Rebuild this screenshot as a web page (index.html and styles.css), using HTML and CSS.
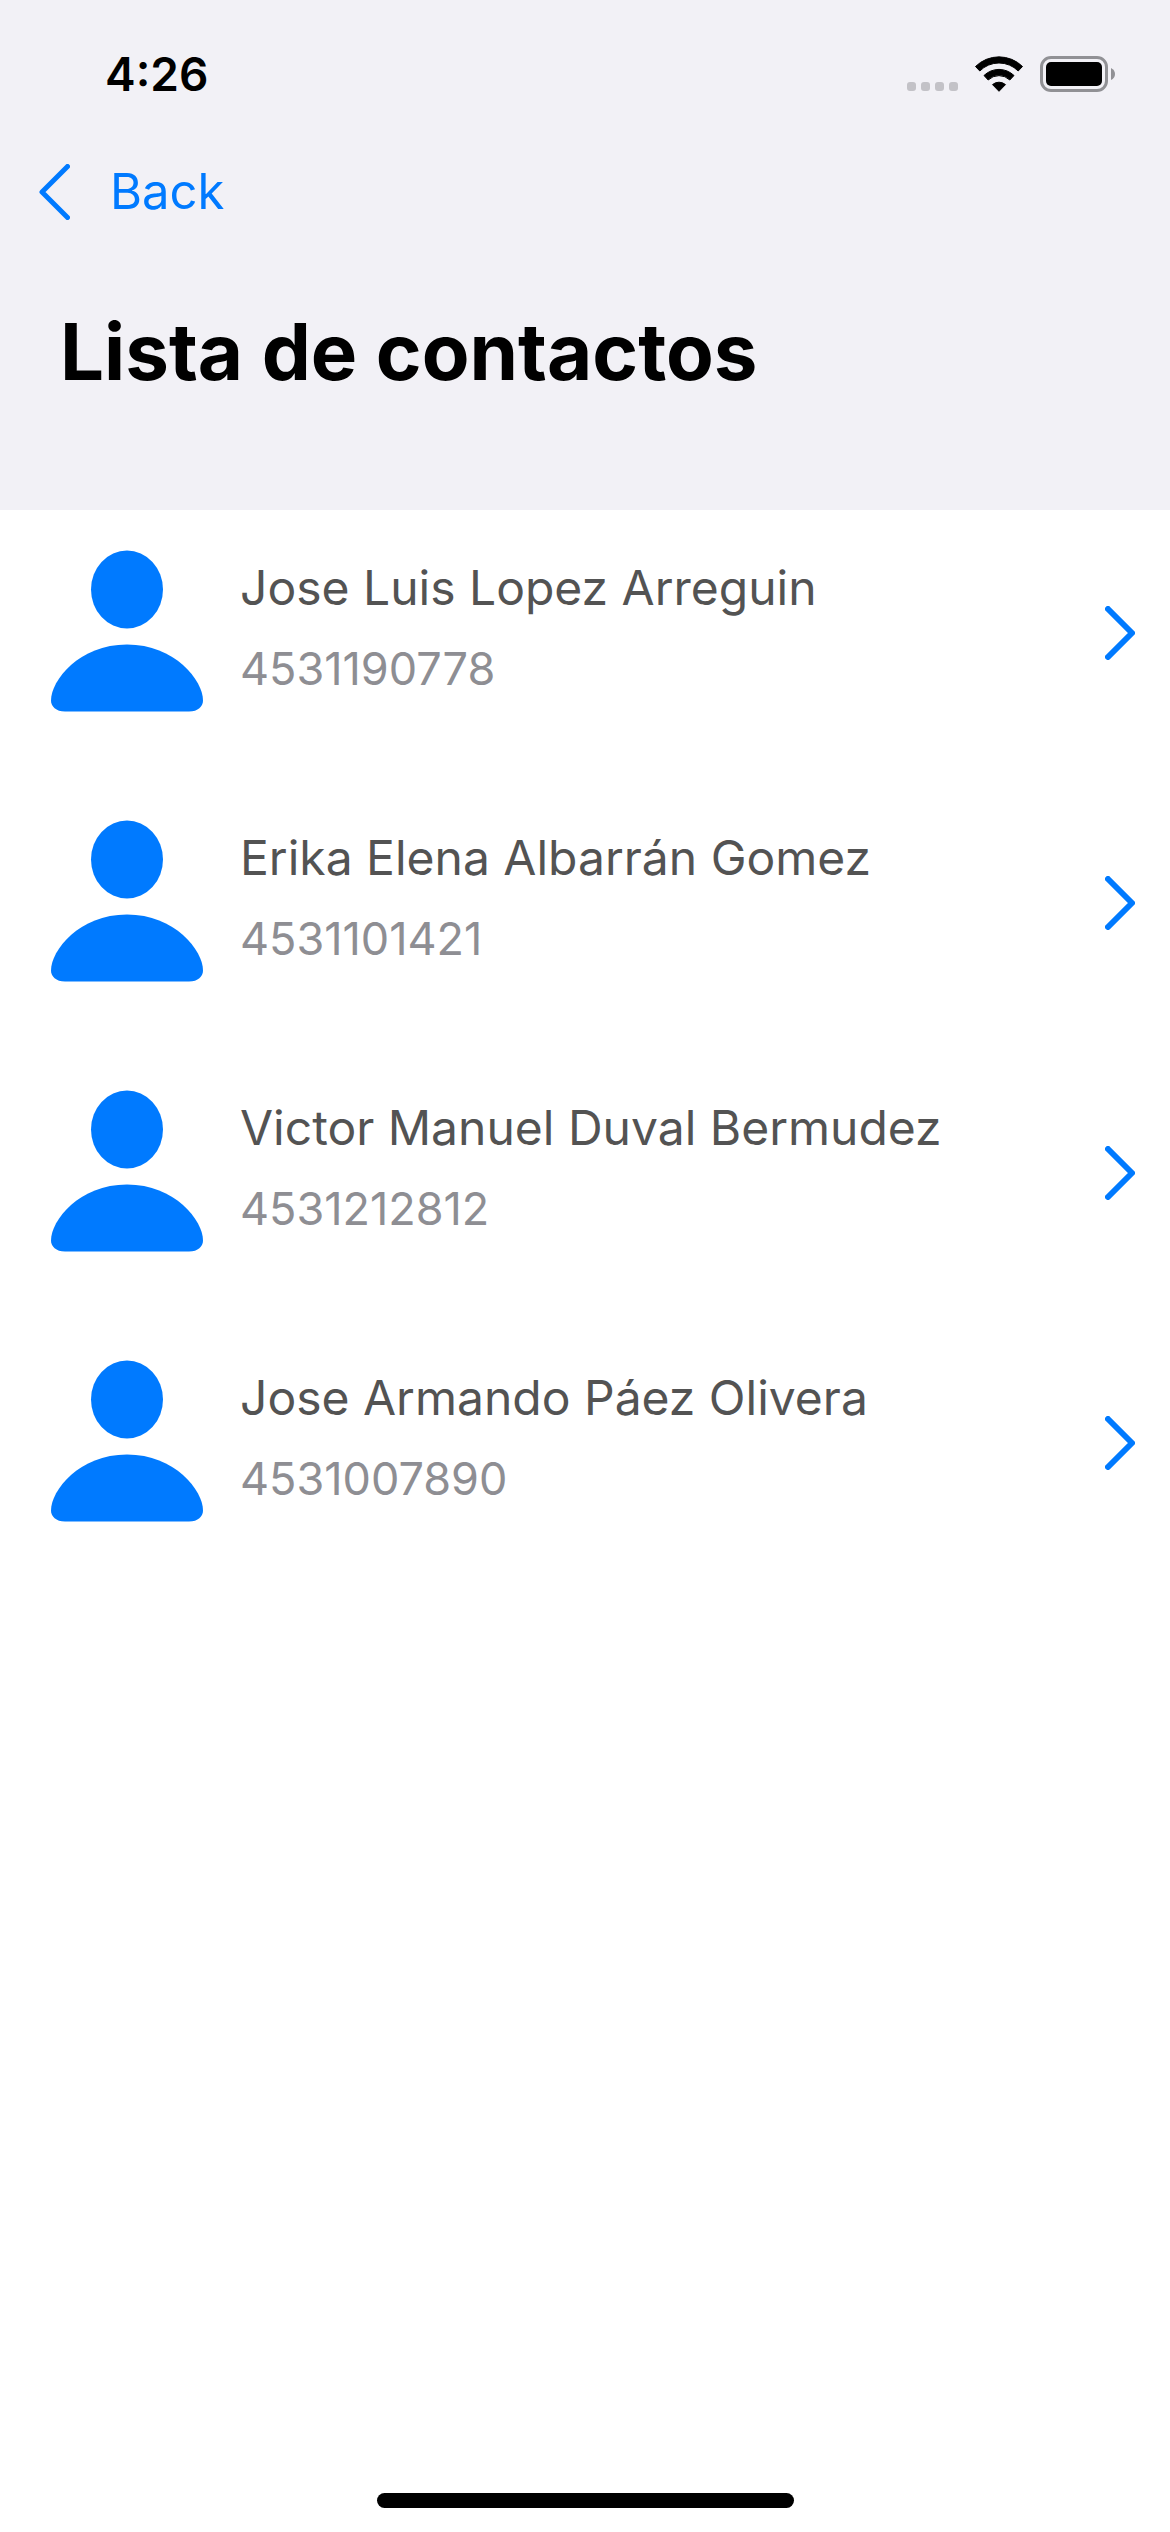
FILE: index.html
```html
<!DOCTYPE html>
<html lang="es">
<head>
<meta charset="utf-8">
<meta name="viewport" content="width=device-width, initial-scale=1">
<title>Lista de contactos</title>
<link rel="stylesheet" href="styles.css">
</head>
<body>
<svg class="symbols" aria-hidden="true">
  <symbol id="person" viewBox="0 0 152 161">
    <ellipse cx="76" cy="39" rx="36" ry="39"/>
    <path d="M14 161C5 161 0 156 0 150C0 130 28 94 76 94S152 130 152 150C152 156 147 161 138 161Z"/>
  </symbol>
  <symbol id="chevron" viewBox="0 0 30 54">
    <path d="M3 3L27 27L3 51" fill="none" stroke="currentColor" stroke-width="6" stroke-linecap="round" stroke-linejoin="round"/>
  </symbol>
</svg>
<header class="header">
  <div class="status">
    <time class="clock">4:26</time>
    <div class="indicators">
      <svg class="cell" viewBox="0 0 51 9" aria-hidden="true">
        <rect width="9" height="9" rx="3"/>
        <rect x="14" width="9" height="9" rx="3"/>
        <rect x="28" width="9" height="9" rx="3"/>
        <rect x="42" width="9" height="9" rx="3"/>
      </svg>
      <svg class="wifi" viewBox="0 0 48 36" aria-hidden="true">
        <path d="M.5 10.500A33.500 33.500 0 0 1 47.500 10.500L43.200 15A27 27 0 0 0 4.800 15Z"/>
        <path d="M9 19.500A21.500 21.500 0 0 1 39 19.500L34.800 24A15.500 15.500 0 0 0 13.200 24Z"/>
        <path d="M17.500 28.600A10 10 0 0 1 30.500 28.600L24 35.300Z"/>
      </svg>
      <svg class="battery" viewBox="0 0 75 36" aria-hidden="true">
        <rect class="shell" x="1.500" y="1.500" width="65" height="33" rx="9.500"/>
        <rect x="6" y="6" width="56" height="24" rx="5"/>
        <path class="nub" d="M71 12Q75 14 75 18T71 24Z"/>
      </svg>
    </div>
  </div>
  <nav class="nav">
    <a class="back" href="#"><svg class="back-icon" viewBox="0 0 31 56" aria-hidden="true"><path d="M28.500 2.500L3 28L28.500 53.500" fill="none" stroke="currentColor" stroke-width="5" stroke-linecap="round" stroke-linejoin="round"/></svg>Back</a>
  </nav>
  <h1 class="title">Lista de contactos</h1>
</header>
<main class="main">
  <ul class="contacts">
    <li>
      <a class="contact" href="#">
        <svg class="avatar" aria-hidden="true"><use href="#person"/></svg>
        <span class="details"><span class="name">Jose Luis Lopez Arreguin</span><span class="phone">4531190778</span></span>
        <svg class="chevron" aria-hidden="true"><use href="#chevron"/></svg>
      </a>
    </li>
    <li>
      <a class="contact" href="#">
        <svg class="avatar" aria-hidden="true"><use href="#person"/></svg>
        <span class="details"><span class="name">Erika Elena Albarrán Gomez</span><span class="phone">4531101421</span></span>
        <svg class="chevron" aria-hidden="true"><use href="#chevron"/></svg>
      </a>
    </li>
    <li>
      <a class="contact" href="#">
        <svg class="avatar" aria-hidden="true"><use href="#person"/></svg>
        <span class="details"><span class="name">Victor Manuel Duval Bermudez</span><span class="phone">4531212812</span></span>
        <svg class="chevron" aria-hidden="true"><use href="#chevron"/></svg>
      </a>
    </li>
    <li>
      <a class="contact" href="#">
        <svg class="avatar" aria-hidden="true"><use href="#person"/></svg>
        <span class="details"><span class="name">Jose Armando Páez Olivera</span><span class="phone">4531007890</span></span>
        <svg class="chevron" aria-hidden="true"><use href="#chevron"/></svg>
      </a>
    </li>
  </ul>
</main>
<footer class="home"><div class="home-bar"></div></footer>
</body>
</html>
```
FILE: styles.css
```css
* {
  box-sizing: border-box;
}

body {
  display: flex;
  flex-direction: column;
  min-height: 100vh;
  margin: 0;
  background: #fff;
  color: #000;
  font-family: Inter, "Liberation Sans", sans-serif;
}

a {
  color: #007aff;
  text-decoration: none;
}

.symbols {
  display: none;
}

.header {
  padding-bottom: 110px;
  background: #f2f1f6;
}

.status {
  display: flex;
  justify-content: space-between;
  padding: 48px 55px 44px 105px;
}

.clock {
  font-size: 46px;
  font-weight: 600;
  line-height: 52px;
}

.indicators {
  display: flex;
  align-items: flex-end;
  gap: 17px;
  height: 44px;
}

.cell {
  width: 51px;
  height: 9px;
  margin-bottom: 1px;
  fill: #c3c2c7;
}

.wifi {
  width: 48px;
  height: 36px;
  stroke: #000;
  stroke-width: 1;
  stroke-linejoin: round;
}

.battery {
  width: 75px;
  height: 36px;
}

.shell {
  fill: none;
  stroke: #919195;
  stroke-width: 3;
}

.nub {
  fill: #919195;
}

.nav {
  display: flex;
  padding: 0 39px;
}

.back {
  display: flex;
  align-items: center;
  gap: 40px;
  font-size: 49px;
  line-height: 96px;
}

.back-icon {
  width: 31px;
  height: 56px;
}

.title {
  margin: 0;
  padding: 64px 60px 0;
  font-size: 78px;
  font-weight: 700;
  line-height: 96px;
}

.main {
  flex: 1;
}

.contacts {
  margin: 0;
  padding: 0;
  list-style: none;
}

.contact {
  display: flex;
  gap: 37px;
  padding: 40px 35px 68px 51px;
}

.avatar {
  flex: none;
  width: 152px;
  height: 162px;
  fill: currentColor;
}

.details {
  display: flex;
  flex: 1;
  flex-direction: column;
}

.name {
  color: #535353;
  font-size: 48px;
  line-height: 76px;
}

.phone {
  color: #8e8e93;
  font-size: 45px;
  line-height: 86px;
}

.chevron {
  flex: none;
  width: 30px;
  height: 54px;
  margin-top: 56px;
}

.home {
  display: flex;
  justify-content: center;
  padding-bottom: 24px;
}

.home-bar {
  width: 417px;
  height: 15px;
  border-radius: 8px;
  background: #000;
}
```
